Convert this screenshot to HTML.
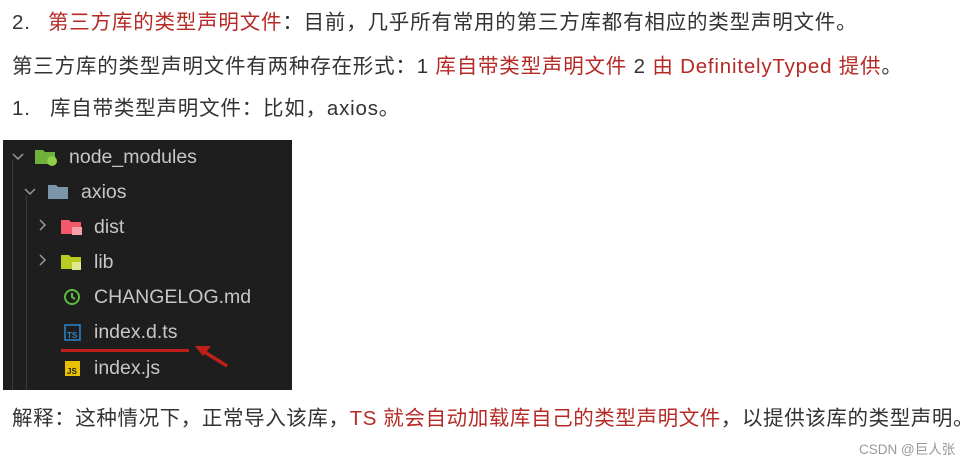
<!DOCTYPE html>
<html><head><meta charset="utf-8"><style>
body{margin:0;width:974px;height:469px;background:#fff;position:relative;overflow:hidden;font-family:"Liberation Sans","Noto Sans CJK SC",sans-serif;color:#333;}
.l{position:absolute;font-size:20.5px;white-space:nowrap;line-height:24px;letter-spacing:0.8px;}
.r{color:#b52a25;}
.img{position:absolute;left:3px;top:140px;width:289px;height:250px;background:#1e1e1e;}
.row{position:absolute;font-size:19.5px;color:#c6c6c6;line-height:22px;white-space:nowrap;}
</style></head><body>
<div class="l" style="left:12px;top:11px">2.</div>
<div class="l" style="left:48px;top:11px"><span class="r">第三方库的类型声明文件</span>：目前，几乎所有常用的第三方库都有相应的类型声明文件。</div>
<div class="l" style="left:12px;top:55px">第三方库的类型声明文件有两种存在形式：1 <span class="r">库自带类型声明文件</span> 2 <span class="r">由 DefinitelyTyped 提供</span>。</div>
<div class="l" style="left:12px;top:97px">1.</div>
<div class="l" style="left:50px;top:97px">库自带类型声明文件：比如，axios。</div>

<div class="img">
 <div style="position:absolute;left:9px;top:20px;width:1px;height:230px;background:#3a3a3a"></div>
 <div style="position:absolute;left:23px;top:55px;width:1px;height:195px;background:#3a3a3a"></div>
 <svg width="289" height="250" style="position:absolute;left:0;top:0">
  <g fill="none" stroke="#999" stroke-width="1.5">
   <path d="M10 14l5 5 5-5"/><path d="M22 49l5 5 5-5"/>
   <path d="M37 80l5 5-5 5"/><path d="M37 115l5 5-5 5"/>
  </g>
  <path d="M32 10h8l2 2h10v12H32z" fill="#6fb23b"/><circle cx="49" cy="21" r="5" fill="#8fd04a"/>
  <path d="M45 45h8l2 2h10v12H45z" fill="#7a96a8"/>
  <path d="M58 80h8l2 2h10v12H58z" fill="#f25a6a"/><rect x="69" y="87" width="10" height="8" fill="#f8a0a8"/>
  <path d="M58 115h8l2 2h10v12H58z" fill="#b8cc20"/><rect x="69" y="122" width="9" height="8" fill="#e0e890"/>
  <circle cx="69" cy="157" r="7" fill="none" stroke="#5dbb3e" stroke-width="2"/><path d="M69 153v4l3 2" stroke="#5dbb3e" stroke-width="2" fill="none"/>
  <rect x="62" y="185" width="15" height="15" fill="none" stroke="#2f86c8" stroke-width="1.5"/><text x="64" y="198" font-size="8" fill="#2f86c8" font-family="Liberation Sans" font-weight="bold">TS</text>
  <rect x="62" y="221" width="15" height="15" fill="#e8c000"/><text x="64" y="234" font-size="8" fill="#222" font-family="Liberation Sans" font-weight="bold">JS</text>
  <rect x="58" y="209" width="128" height="3" fill="#c0201a"/>
  <path d="M224 226L200 211" stroke="#c0201a" stroke-width="3.5"/><path d="M192 206l16 0-8 10z" fill="#c0201a"/>
 </svg>
 <div class="row" style="left:66px;top:6px">node_modules</div>
 <div class="row" style="left:78px;top:41px">axios</div>
 <div class="row" style="left:91px;top:76px">dist</div>
 <div class="row" style="left:91px;top:111px">lib</div>
 <div class="row" style="left:91px;top:146px">CHANGELOG.md</div>
 <div class="row" style="left:91px;top:181px">index.d.ts</div>
 <div class="row" style="left:91px;top:217px">index.js</div>
</div>

<div class="l" style="left:12px;top:407px;letter-spacing:0.6px">解释：这种情况下，正常导入该库，<span class="r">TS 就会自动加载库自己的类型声明文件</span>，以提供该库的类型声明。</div>
<div class="l" style="left:859px;top:442px;font-size:13.5px;color:#999;line-height:16px;letter-spacing:0">CSDN @巨人张</div>
</body></html>
